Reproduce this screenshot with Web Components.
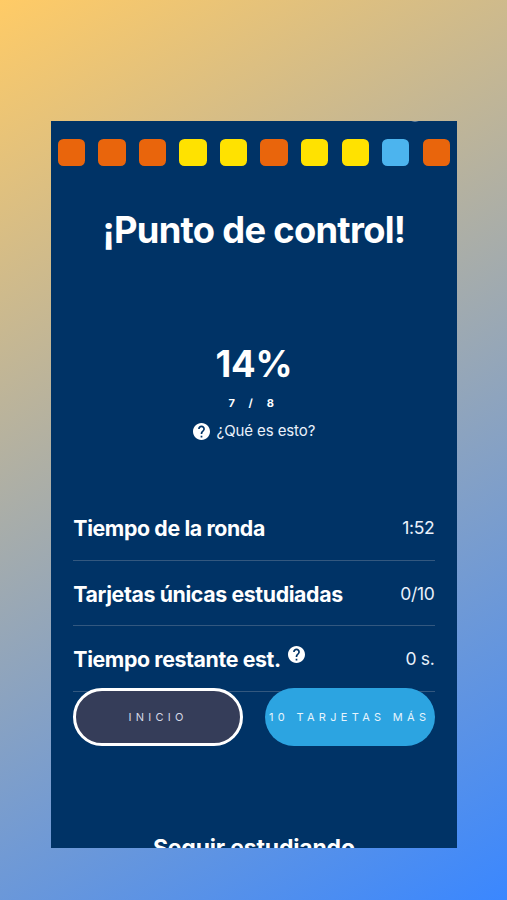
<!DOCTYPE html>
<html lang="es">
<head>
<meta charset="utf-8">
<title>Punto de control</title>
<style>
    body {
        margin: 0;
        font-family: Inter, "Liberation Sans", sans-serif;
        color: #fff;
    }
</style>
</head>
<body>
<checkpoint-page>
    <progress-squares slot="progress" colors="oooyyoyybo"></progress-squares>
    <span slot="title">¡Punto de control!</span>
    <score-summary slot="score" percent="14%" count="7 / 8">¿Qué es esto?</score-summary>
    <stat-row value="1:52">Tiempo de la ronda</stat-row>
    <stat-row value="0/10">Tarjetas únicas estudiadas</stat-row>
    <stat-row value="0 s." help>Tiempo restante est.</stat-row>
    <pill-button slot="actions" kind="outline">INICIO</pill-button>
    <pill-button slot="actions" kind="primary">10 TARJETAS MÁS</pill-button>
    <span slot="footer">Seguir estudiando</span>
</checkpoint-page>

<script>
function makeTemplate(html) {
    const template = document.createElement('template');
    template.innerHTML = html;
    return template;
}

class BaseElement extends HTMLElement {
    constructor() {
        super();
        this.attachShadow({ mode: 'open' });
        this.shadowRoot.appendChild(this.constructor.template.content.cloneNode(true));
    }
}

class HelpIcon extends BaseElement {
    static template = makeTemplate(`
        <style>
            :host {
                display: inline-block;
                width: 17px;
                height: 17px;
            }
            svg {
                display: block;
                width: 100%;
                height: 100%;
            }
        </style>
        <svg viewBox="2 2 20 20" fill="currentColor"><path d="M12 2C6.48 2 2 6.48 2 12s4.48 10 10 10 10-4.48 10-10S17.52 2 12 2zm1 17h-2v-2h2v2zm2.07-7.75l-.9.92C13.45 12.9 13 13.5 13 15h-2v-.5c0-1.1.45-2.1 1.17-2.83l1.24-1.26c.37-.36.59-.86.59-1.41 0-1.1-.9-2-2-2s-2 .9-2 2H8c0-2.21 1.79-4 4-4s4 1.79 4 4c0 .88-.36 1.68-.93 2.25z"/></svg>
    `);
}

class ProgressSquares extends BaseElement {
    static template = makeTemplate(`
        <style>
            :host {
                display: flex;
                justify-content: space-between;
                padding: 0 6.5px;
            }
            i {
                width: 27.3px;
                height: 27.3px;
                border-radius: 5.5px;
            }
            .o { background: #e9650c; }
            .y { background: #ffe200; }
            .b { background: #4cb4ee; }
        </style>
    `);

    connectedCallback() {
        for (const color of this.getAttribute('colors')) {
            const square = document.createElement('i');
            square.className = color;
            this.shadowRoot.append(square);
        }
    }
}

class ScoreSummary extends BaseElement {
    static template = makeTemplate(`
        <style>
            :host {
                display: flex;
                flex-direction: column;
                align-items: center;
            }
            #percent {
                font-size: 36.5px;
                font-weight: 700;
                line-height: 44px;
                letter-spacing: -0.3px;
            }
            #count {
                margin-top: 10px;
                font-size: 11px;
                font-weight: 700;
                line-height: 14px;
                letter-spacing: 5.6px;
            }
            .hint {
                display: flex;
                align-items: center;
                gap: 7px;
                margin-top: 11px;
                font-size: 15px;
                line-height: 20px;
                letter-spacing: -0.1px;
                color: #eaf1fb;
            }
            help-icon { color: #fff; }
        </style>
        <div id="percent"></div>
        <div id="count"></div>
        <div class="hint"><help-icon></help-icon><slot></slot></div>
    `);

    connectedCallback() {
        this.shadowRoot.querySelector('#percent').textContent = this.getAttribute('percent');
        this.shadowRoot.querySelector('#count').textContent = this.getAttribute('count');
    }
}

class StatRow extends BaseElement {
    static template = makeTemplate(`
        <style>
            :host {
                display: flex;
                align-items: center;
                height: 65.5px;
                box-sizing: border-box;
                border-bottom: 1.5px solid #33587f;
            }
            .label {
                flex: 1;
                display: flex;
                gap: 7px;
                padding-top: 1px;
                font-size: 21.3px;
                font-weight: 700;
                line-height: 26px;
                letter-spacing: -0.37px;
                white-space: nowrap;
            }
            #value {
                font-size: 17.5px;
                letter-spacing: -0.3px;
                color: #eaf1fb;
            }
            help-icon { display: none; }
            :host([help]) help-icon { display: block; }
        </style>
        <div class="label"><span><slot></slot></span><help-icon></help-icon></div>
        <div id="value"></div>
    `);

    connectedCallback() {
        this.shadowRoot.querySelector('#value').textContent = this.getAttribute('value');
    }
}

class PillButton extends BaseElement {
    static template = makeTemplate(`
        <style>
            :host { display: block; }
            button {
                display: flex;
                align-items: center;
                justify-content: center;
                width: 100%;
                height: 58px;
                padding: 0;
                border: 0;
                border-radius: 29px;
                background: #2ca4e1;
                color: #e6f4fd;
                font-family: inherit;
                font-size: 11px;
                letter-spacing: 4.3px;
                white-space: nowrap;
            }
            :host([kind="outline"]) button {
                border: 3px solid #fff;
                background: #353d59;
                color: #d5d9e6;
            }
        </style>
        <button><slot></slot></button>
    `);
}

class CheckpointPage extends BaseElement {
    static template = makeTemplate(`
        <style>
            :host {
                display: block;
                box-sizing: border-box;
                height: 900px;
                padding: 121px 50.5px 52px 51.3px;
                background: linear-gradient(150deg, #ffcb66, #3a87ff);
            }
            main {
                height: 727px;
                overflow: hidden;
                box-sizing: border-box;
                padding-top: 18px;
                background: radial-gradient(ellipse 4px 1.5px at 364px 0, #8ba1b8, transparent) #003366;
            }
            h1 {
                margin: 41px 0 0;
                font-size: 36.3px;
                font-weight: 700;
                line-height: 46px;
                letter-spacing: -0.7px;
                text-align: center;
                white-space: nowrap;
            }
            .score { margin-top: 89px; }
            .stats { margin: 54px 22px 0; }
            .actions {
                position: relative;
                display: grid;
                grid-template-columns: 1fr 1fr;
                gap: 22px;
                margin: -4px 22px 0;
            }
            h2 {
                margin: 88px 0 0;
                font-size: 23px;
                font-weight: 700;
                line-height: 28px;
                letter-spacing: -0.18px;
                text-align: center;
            }
        </style>
        <main>
            <slot name="progress"></slot>
            <h1><slot name="title"></slot></h1>
            <div class="score"><slot name="score"></slot></div>
            <div class="stats"><slot></slot></div>
            <div class="actions"><slot name="actions"></slot></div>
            <h2><slot name="footer"></slot></h2>
        </main>
    `);
}

customElements.define('help-icon', HelpIcon);
customElements.define('progress-squares', ProgressSquares);
customElements.define('score-summary', ScoreSummary);
customElements.define('stat-row', StatRow);
customElements.define('pill-button', PillButton);
customElements.define('checkpoint-page', CheckpointPage);
</script>
</body>
</html>
